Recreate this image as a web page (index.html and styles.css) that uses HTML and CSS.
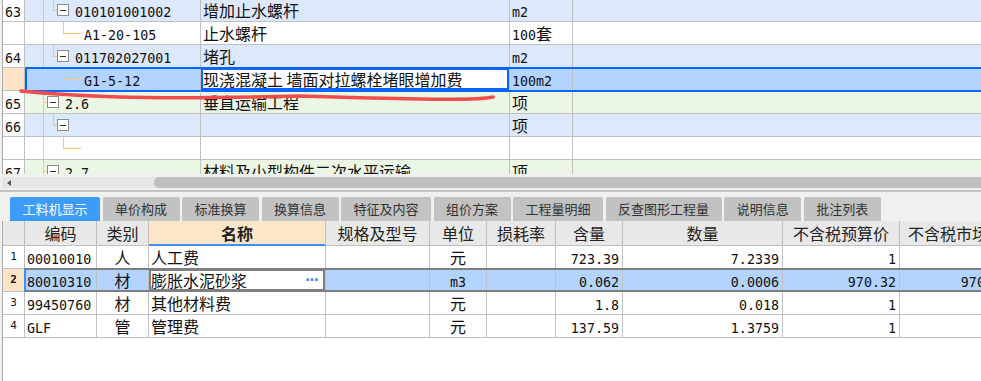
FILE: index.html
```html
<!DOCTYPE html>
<html lang="zh-CN">
<head>
    <meta charset="UTF-8">
    <meta name="viewport" content="width=device-width, initial-scale=1.0">
    <title>工料机显示</title>
    <link rel="stylesheet" href="styles.css">
</head>
<body>
    <div class="top">
        <div class="grid">
            <div class="row blue">
                <div class="c num"><span class="n">63</span></div>
                <div class="c tree t3">
                    <i class="trunk"></i><i class="elbow e2"></i><i class="tbox k3"></i>
                    <span class="n">010101001002</span>
                </div>
                <div class="c name">增加止水螺杆</div>
                <div class="c unit"><span class="n">m2</span></div>
                <div class="c rest"></div>
            </div>
            <div class="row white">
                <div class="c num"></div>
                <div class="c tree t4">
                    <i class="trunk"></i><i class="elbow e3"></i>
                    <span class="n">A1-20-105</span>
                </div>
                <div class="c name">止水螺杆</div>
                <div class="c unit"><span class="n">100</span>套</div>
                <div class="c rest"></div>
            </div>
            <div class="row blue">
                <div class="c num"><span class="n">64</span></div>
                <div class="c tree t3">
                    <i class="trunk"></i><i class="elbow e2"></i><i class="tbox k3"></i>
                    <span class="n">011702027001</span>
                </div>
                <div class="c name">堵孔</div>
                <div class="c unit"><span class="n">m2</span></div>
                <div class="c rest"></div>
            </div>
            <div class="row sel">
                <div class="c num peach"></div>
                <div class="c tree t4">
                    <i class="trunk"></i><i class="elbow e3"></i>
                    <span class="n">G1-5-12</span>
                </div>
                <div class="c name edit">现浇混凝土 墙面对拉螺栓堵眼增加费</div>
                <div class="c unit"><span class="n">100m2</span></div>
                <div class="c rest"></div>
            </div>
            <div class="row green">
                <div class="c num"><span class="n">65</span></div>
                <div class="c tree t2">
                    <i class="trunk"></i><i class="stub"></i><i class="tbox k2"></i>
                    <span class="n">2.6</span>
                </div>
                <div class="c name">垂直运输工程</div>
                <div class="c unit">项</div>
                <div class="c rest"></div>
            </div>
            <div class="row blue">
                <div class="c num"><span class="n">66</span></div>
                <div class="c tree t3">
                    <i class="trunk"></i><i class="elbow e2"></i><i class="tbox k3"></i>
                </div>
                <div class="c name"></div>
                <div class="c unit">项</div>
                <div class="c rest"></div>
            </div>
            <div class="row white">
                <div class="c num"></div>
                <div class="c tree t4">
                    <i class="trunk"></i><i class="elbow e3"></i>
                </div>
                <div class="c name"></div>
                <div class="c unit"></div>
                <div class="c rest"></div>
            </div>
            <div class="row green">
                <div class="c num"><span class="n">67</span></div>
                <div class="c tree t2">
                    <i class="trunk"></i><i class="stub"></i><i class="tbox k2"></i>
                    <span class="n">2.7</span>
                </div>
                <div class="c name">材料及小型构件二次水平运输</div>
                <div class="c unit">项</div>
                <div class="c rest"></div>
            </div>
        </div>
        <svg class="mark" width="520" height="120" viewBox="0 0 520 120">
            <path d="M21 91 Q 60 95 120 97 T 300 96 Q 360 98 420 99 T 493 97" />
        </svg>
    </div>

    <div class="hscroll">
        <div class="track">
            <div class="arrow-area"><i class="arrow"></i></div>
            <div class="thumb"></div>
        </div>
    </div>

    <div class="tabs">
        <span class="tab active">工料机显示</span>
        <span class="tab">单价构成</span>
        <span class="tab">标准换算</span>
        <span class="tab">换算信息</span>
        <span class="tab">特征及内容</span>
        <span class="tab">组价方案</span>
        <span class="tab">工程量明细</span>
        <span class="tab">反查图形工程量</span>
        <span class="tab">说明信息</span>
        <span class="tab">批注列表</span>
    </div>

    <div class="bottom">
        <div class="lgrid">
            <div class="lrow head">
                <div class="h"></div>
                <div class="h">编码</div>
                <div class="h">类别</div>
                <div class="h hname">名称</div>
                <div class="h">规格及型号</div>
                <div class="h">单位</div>
                <div class="h">损耗率</div>
                <div class="h">含量</div>
                <div class="h">数量</div>
                <div class="h">不含税预算价</div>
                <div class="h">不含税市场价</div>
            </div>
            <div class="lrow">
                <div class="d idx">1</div>
                <div class="d"><span class="n">00010010</span></div>
                <div class="d mid">人</div>
                <div class="d">人工费</div>
                <div class="d"></div>
                <div class="d mid">元</div>
                <div class="d"></div>
                <div class="d right"><span class="n">723.39</span></div>
                <div class="d right"><span class="n">7.2339</span></div>
                <div class="d right"><span class="n">1</span></div>
                <div class="d right"><span class="n">1</span></div>
            </div>
            <div class="lrow cur">
                <div class="d idx peach bold">2</div>
                <div class="d"><span class="n">80010310</span></div>
                <div class="d mid">材</div>
                <div class="d editing"><span>膨胀水泥砂浆</span><span class="more">···</span></div>
                <div class="d"></div>
                <div class="d mid"><span class="n">m3</span></div>
                <div class="d"></div>
                <div class="d right"><span class="n">0.062</span></div>
                <div class="d right"><span class="n">0.0006</span></div>
                <div class="d right"><span class="n">970.32</span></div>
                <div class="d right"><span class="n">970.32</span></div>
            </div>
            <div class="lrow">
                <div class="d idx">3</div>
                <div class="d"><span class="n">99450760</span></div>
                <div class="d mid">材</div>
                <div class="d">其他材料费</div>
                <div class="d"></div>
                <div class="d mid">元</div>
                <div class="d"></div>
                <div class="d right"><span class="n">1.8</span></div>
                <div class="d right"><span class="n">0.018</span></div>
                <div class="d right"><span class="n">1</span></div>
                <div class="d right"><span class="n">1</span></div>
            </div>
            <div class="lrow">
                <div class="d idx">4</div>
                <div class="d"><span class="n">GLF</span></div>
                <div class="d mid">管</div>
                <div class="d">管理费</div>
                <div class="d"></div>
                <div class="d mid">元</div>
                <div class="d"></div>
                <div class="d right"><span class="n">137.59</span></div>
                <div class="d right"><span class="n">1.3759</span></div>
                <div class="d right"><span class="n">1</span></div>
                <div class="d right"><span class="n">1</span></div>
            </div>
        </div>
    </div>
</body>
</html>
```

FILE: styles.css
```css
html, body {
    margin: 0;
    height: 100%;
}
body {
    background-color: #f0f0f0;
    font-family: "Noto Sans CJK SC", sans-serif;
    font-size: 16px;
    color: #111;
    display: flex;
    flex-direction: column;
    height: 381px;
    overflow: hidden;
}
.n {
    font-family: "DejaVu Sans Mono", monospace;
    font-size: 13.33px;
}

/* upper grid */
.top {
    position: relative;
    height: 174px;
    margin-left: 2px;
    border-left: 1px solid #a9a9a9;
    overflow: hidden;
    background: #fff;
}
.grid {
    margin-top: -1px;
}
.row {
    display: grid;
    grid-template-columns: 22px 176px 309px 63px 1fr;
    height: 23px;
    line-height: 22px;
}
.row .c {
    box-sizing: border-box;
    border-right: 1px solid #c0c0c0;
    border-bottom: 1px solid #c0c0c0;
    white-space: nowrap;
    overflow: hidden;
}
.row .rest {
    border-right: none;
}
.blue { background: #dce8fc; }
.green { background: #ebf6e5; }
.white { background: #fff; }
.sel {
    position: relative;
    background: #b3d4ff;
}
.sel::after {
    content: "";
    position: absolute;
    left: 22px;
    right: 0;
    top: -1px;
    bottom: -1px;
    border: 2px solid #0a64ff;
    border-right: none;
    pointer-events: none;
}
.num {
    background: #fff;
    padding-left: 2px;
}
.peach {
    background: #fde4c6;
}
.name {
    padding-left: 2px;
}
.unit {
    padding-left: 2px;
}
.edit {
    background: #fff;
    box-shadow: inset 0 0 0 2px #0a64ff;
}

/* tree guides */
.tree {
    position: relative;
}
.t2 { padding-left: 40px; }
.t3 { padding-left: 50px; }
.t4 { padding-left: 59px; }
.tree i {
    position: absolute;
    box-sizing: border-box;
}
.trunk {
    left: 18px;
    top: 0;
    bottom: -1px;
    width: 1px;
    background: #f8c37c;
}
.stub {
    left: 18px;
    top: 11px;
    width: 4px;
    height: 1px;
    background: #f8c37c;
}
.elbow {
    top: 0;
    height: 12px;
    border-left: 1px solid #f8c37c;
    border-bottom: 1px solid #f8c37c;
}
.e2 { left: 28px; width: 5px; }
.e3 { left: 38px; width: 18px; }
.tbox {
    top: 5px;
    width: 12px;
    height: 12px;
    border: 1px solid #8c8c8c;
    background: #fff;
}
.tbox::after {
    content: "";
    position: absolute;
    left: 2px;
    right: 2px;
    top: 5px;
    height: 1px;
    background: #333;
}
.k2 { left: 22px; }
.k3 { left: 32px; }

.mark {
    position: absolute;
    left: -3px;
    top: 0;
    pointer-events: none;
}
.mark path {
    fill: none;
    stroke: #f24c4c;
    stroke-width: 3.5;
    stroke-linecap: round;
}

/* scrollbar */
.hscroll {
    height: 18px;
    box-sizing: border-box;
    padding: 3px 0 2px 2px;
    border-bottom: 2px solid #c3c3c3;
}
.track {
    display: flex;
    height: 11px;
    background: #e6e6e6;
}
.arrow-area {
    width: 152px;
    display: flex;
    align-items: center;
}
.arrow {
    margin-left: 5px;
    width: 0;
    height: 0;
    border-top: 3px solid transparent;
    border-bottom: 3px solid transparent;
    border-right: 4px solid #555;
}
.thumb {
    flex: 1;
    background: #c0c0c0;
    border-radius: 5px 0 0 5px;
}

/* tabs */
.tabs {
    display: flex;
    gap: 2.5px;
    padding: 5px 0 0 10px;
    height: 29px;
    box-sizing: border-box;
}
.tab {
    height: 24px;
    line-height: 24px;
    padding: 0 12.5px;
    font-size: 13px;
    color: #333;
    background: #c2c2c2;
    border-radius: 2px 2px 0 0;
    white-space: nowrap;
}
.tab.active {
    background: #3d9cfb;
    color: #fff;
}

/* lower grid */
.bottom {
    flex: 1;
    margin-left: 2px;
    border-left: 1px solid #a9a9a9;
    background: #fff;
    overflow: hidden;
}
.lgrid {
    width: 1010px;
}
.lrow {
    display: grid;
    grid-template-columns: 22px 72px 52px 177px 104px 57px 69px 67px 160px 117px 113px;
    height: 23px;
    line-height: 22px;
}
.lrow.head {
    height: 25px;
    line-height: 24px;
}
.lrow > div {
    box-sizing: border-box;
    border-right: 1px solid #c0c0c0;
    border-bottom: 1px solid #c0c0c0;
    white-space: nowrap;
    overflow: hidden;
}
.h {
    background: #e8e8e8;
    text-align: center;
    color: #222;
}
.hname {
    background: #fde6c8;
    font-weight: bold;
    border-bottom-color: #3d8ef8 !important;
    box-shadow: inset 0 -1px 0 #3d8ef8;
}
.d {
    padding: 0 2px;
}
.idx {
    text-align: center;
    font-family: "DejaVu Sans Mono", monospace;
    font-size: 11px;
}
.bold {
    font-weight: bold;
}
.mid {
    text-align: center;
}
.right {
    text-align: right;
    padding-right: 3px;
}
.cur {
    position: relative;
    background: #b3d4ff;
}
.cur::after {
    content: "";
    position: absolute;
    left: 21px;
    right: 0;
    top: -1px;
    bottom: 0;
    border-top: 2px solid #7f7f7f;
    border-bottom: 2px solid #7f7f7f;
    border-left: 2px solid #3d8ef8;
    pointer-events: none;
}
.editing {
    display: flex;
    justify-content: space-between;
    background: #fff;
    box-shadow: inset 0 0 0 2px #7f7f7f;
}
.more {
    color: #3d8ef8;
    font-family: "DejaVu Sans", sans-serif;
    font-size: 14px;
    font-weight: bold;
    letter-spacing: -1px;
    margin-right: 5px;
}
```
